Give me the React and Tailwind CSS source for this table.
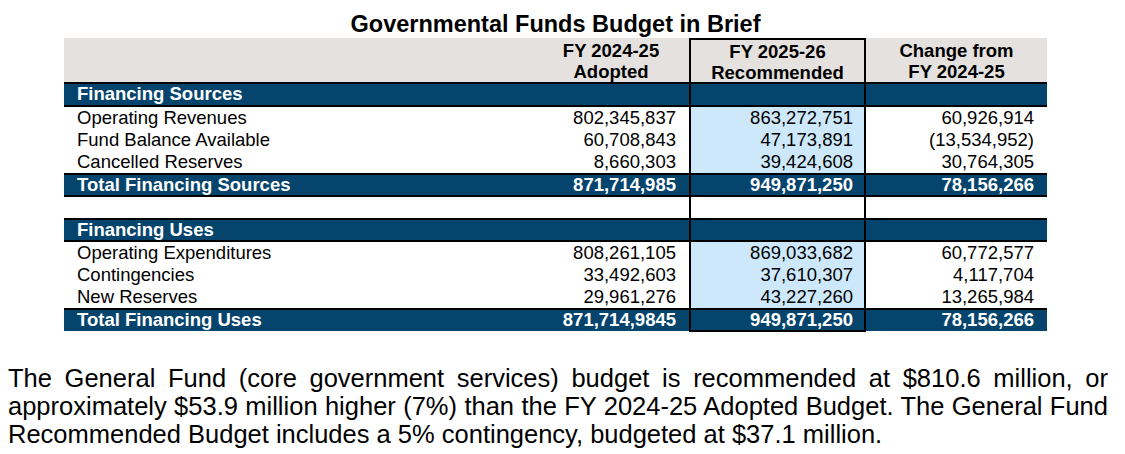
const cols = "grid grid-cols-[469px_156px_177px_181px]";

const sources = [
  ["Operating Revenues", "802,345,837", "863,272,751", "60,926,914"],
  ["Fund Balance Available", "60,708,843", "47,173,891", "(13,534,952)"],
  ["Cancelled Reserves", "8,660,303", "39,424,608", "30,764,305"],
];

const uses = [
  ["Operating Expenditures", "808,261,105", "869,033,682", "60,772,577"],
  ["Contingencies", "33,492,603", "37,610,307", "4,117,704"],
  ["New Reserves", "29,961,276", "43,227,260", "13,265,984"],
];

function DataRow({ row }) {
  return (
    <div className={`${cols} h-[22px] leading-[22px]`}>
      <div className="pl-[13px]">{row[0]}</div>
      <div className="text-right pr-[13px]">{row[1]}</div>
      <div className="text-right pr-[11px] bg-[#cde8fb] border-x-2 border-black">{row[2]}</div>
      <div className="text-right pr-[13px]">{row[3]}</div>
    </div>
  );
}

function SectionRow({ label, className }) {
  return (
    <div className={`${cols} bg-[#05446c] text-white font-bold border-black leading-[20px] ${className}`}>
      <div className="pl-[13px]">{label}</div>
      <div />
      <div className="border-x-2 border-black" />
      <div />
    </div>
  );
}

function TotalRow({ label, values, className, last }) {
  return (
    <div className={`${cols} bg-[#05446c] text-white font-bold border-black leading-[20px] ${className}`}>
      <div className="pl-[13px]">{label}</div>
      <div className="text-right pr-[13px]">{values[0]}</div>
      <div
        className={`text-right pr-[11px] border-x-2 border-black ${last ? "border-b-2" : ""}`}
      >
        {values[1]}
      </div>
      <div className="text-right pr-[13px]">{values[2]}</div>
    </div>
  );
}

export default function App() {
  return (
    <div className="w-[1125px] h-[454px] bg-white text-black font-['Liberation_Sans',Arial,sans-serif] overflow-hidden">
      <div className="ml-[64px] w-[983px]">
        <h1 className="pt-[10px] text-center text-[23.5px] leading-[28px] font-bold">
          Governmental Funds Budget in Brief
        </h1>

        <div className="text-[18.5px]">
          <div className={`${cols} h-[46px] bg-[#e4e1de] border-b-2 border-black font-bold leading-[21px]`}>
            <div />
            <div className="text-center pt-[2px]">
              FY 2024-25
              <br />
              Adopted
            </div>
            <div className="text-center pt-[1px] border-x-2 border-t-2 border-black">
              FY 2025-26
              <br />
              Recommended
            </div>
            <div className="text-center pt-[2px]">
              Change from
              <br />
              FY 2024-25
            </div>
          </div>

          <SectionRow label="Financing Sources" className="h-[23px] border-b-2" />
          {sources.map((r) => (
            <DataRow key={r[0]} row={r} />
          ))}
          <TotalRow
            label="Total Financing Sources"
            values={["871,714,985", "949,871,250", "78,156,266"]}
            className="h-[24px] border-y-2"
          />

          <div className={`${cols} h-[21px]`}>
            <div />
            <div />
            <div className="border-x-2 border-black" />
            <div />
          </div>

          <SectionRow label="Financing Uses" className="h-[24px] border-y-2" />
          {uses.map((r) => (
            <DataRow key={r[0]} row={r} />
          ))}
          <TotalRow
            label="Total Financing Uses"
            values={["871,714,9845", "949,871,250", "78,156,266"]}
            className="h-[23px] border-t-2"
            last
          />
        </div>
      </div>

      <p className="mt-[33px] ml-[8px] w-[1100px] text-[25.5px] leading-[28px] text-justify">
        The General Fund (core government services) budget is recommended at $810.6 million, or
        approximately $53.9 million higher (7%) than the FY 2024-25 Adopted Budget. The General Fund
        Recommended Budget includes a 5% contingency, budgeted at $37.1 million.
      </p>
    </div>
  );
}
